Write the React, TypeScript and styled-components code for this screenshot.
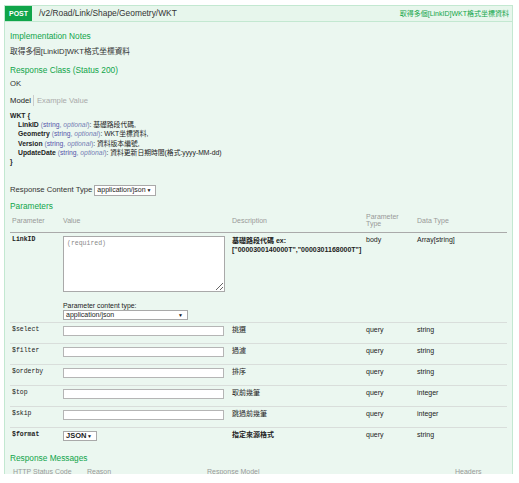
import React from 'react';
import styled, { createGlobalStyle } from 'styled-components';

const GREEN = '#10a54a';

const GlobalStyle = createGlobalStyle`
  html, body {
    margin: 0;
    padding: 0;
    background: #fff;
  }
  body {
    font-family: "Liberation Sans", Arial, "Noto Sans CJK TC", sans-serif;
    color: #333;
  }
  * {
    box-sizing: border-box;
  }
`;

const Page = styled.div`
  height: 474px;
  overflow: hidden;
  padding: 5px 6px 0 4px;
`;

const Heading = styled.div`
  display: flex;
  align-items: stretch;
  height: 17px;
  background: #e7f6ec;
  border: 1px solid #c3e8d1;
`;

const Method = styled.span`
  display: flex;
  align-items: center;
  justify-content: center;
  width: 27px;
  background: ${GREEN};
  color: #fff;
  font-size: 7px;
  font-weight: bold;
`;

const Path = styled.span`
  padding-left: 7px;
  font-size: 8.4px;
  line-height: 15px;
  color: #333;
`;

const Summary = styled.span`
  margin-left: auto;
  padding-right: 3px;
  font-size: 7px;
  line-height: 15px;
  color: ${GREEN};
`;

const Content = styled.div`
  background: #ebf7f0;
  border: 1px solid #c3e8d1;
  border-top: none;
  padding: 8.5px 5px 30px;
`;

const Title = styled.h4<{ $top?: number }>`
  margin: ${p => p.$top ?? 0}px 0 0;
  font-size: 8.3px;
  line-height: 11px;
  font-weight: normal;
  color: ${GREEN};
`;

const Text = styled.p<{ $top?: number }>`
  margin: ${p => p.$top ?? 0}px 0 0;
  font-size: 7.7px;
  line-height: 11px;
`;

const Tabs = styled.div`
  display: flex;
  margin-top: 6px;
  font-size: 7.7px;
  line-height: 11px;
`;

const Tab = styled.span<{ $active?: boolean }>`
  padding-right: 2px;
  margin-right: 3px;
  color: ${p => (p.$active ? '#222' : '#aaa')};
  border-right: ${p => (p.$active ? '1px solid #ccc' : 'none')};
`;

const ModelBox = styled.div`
  margin-top: 5.2px;
  font-size: 6.8px;
  line-height: 9.2px;
  color: #222;
`;

const PropLine = styled.div<{ $indent?: boolean }>`
  padding-left: ${p => (p.$indent ? 8 : 0)}px;
  white-space: nowrap;
`;

const PropName = styled.b``;

const PropMeta = styled.span`
  color: #7480b4;
`;

const PropType = styled.span`
  color: #5555aa;
`;

const PropOpt = styled.span`
  font-style: italic;
`;

const ContentType = styled.div`
  display: flex;
  align-items: center;
  gap: 2px;
  margin-top: 18px;
  font-size: 7.7px;
  line-height: 12px;
`;

const Select = styled.span<{ $w: number; $bold?: boolean }>`
  display: inline-flex;
  align-items: center;
  justify-content: space-between;
  width: ${p => p.$w}px;
  height: ${p => (p.$bold ? 10 : 11)}px;
  padding: 0 4px 0 2px;
  background: #fff;
  border: 1px solid #a9a9a9;
  font-size: ${p => (p.$bold ? 7.5 : 7)}px;
  font-weight: ${p => (p.$bold ? 'bold' : 'normal')};
  color: #222;
  line-height: 8px;
`;

const Arrow = styled.span`
  font-size: 5px;
  color: #111;
`;

const Table = styled.table`
  width: 100%;
  border-collapse: collapse;
  table-layout: fixed;
`;

const Th = styled.th<{ $first?: boolean }>`
  padding: 2px 0 4.5px ${p => (p.$first ? 2 : 0)}px;
  font-size: 7px;
  line-height: 6.5px;
  font-weight: normal;
  color: #999;
  text-align: left;
  vertical-align: middle;
  border-bottom: 1px solid #aaa;
`;

const Td = styled.td<{ $pb?: number; $bold?: boolean; $lh?: number }>`
  padding: 3px 0 ${p => p.$pb ?? 7}px;
  font-size: 7px;
  line-height: ${p => p.$lh ?? 8}px;
  font-weight: ${p => (p.$bold ? 'bold' : 'normal')};
  color: #222;
  vertical-align: top;
  border-top: 1px solid #d9dedb;
`;

const Code = styled.td<{ $bold?: boolean }>`
  padding: 3px 0 7px 2px;
  font-family: "Liberation Mono", "DejaVu Sans Mono", monospace;
  font-size: 6.5px;
  line-height: 8px;
  font-weight: ${p => (p.$bold ? 'bold' : 'normal')};
  color: #222;
  vertical-align: top;
  border-top: 1px solid #d9dedb;
`;

const Body = styled.textarea`
  display: block;
  width: 162px;
  height: 56px;
  margin: 0;
  padding: 3px;
  border: 1px solid #a9a9a9;
  background: #fff;
  font-family: "Liberation Mono", "DejaVu Sans Mono", monospace;
  font-size: 6.5px;
  &::placeholder {
    color: #888;
  }
`;

const SubLabel = styled.div`
  margin-top: 10px;
  font-size: 6.9px;
  line-height: 8px;
  color: #222;
`;

const Input = styled.input`
  display: block;
  width: 161px;
  height: 10px;
  margin: 0;
  padding: 0 2px;
  border: 1px solid #b5b5b5;
  background: #fff;
`;

const MsgTh = styled.th<{ $pl?: number }>`
  padding: 3.5px 0 0 ${p => p.$pl ?? 0}px;
  font-size: 7px;
  line-height: 8px;
  font-weight: normal;
  color: #999;
  text-align: left;
`;

const queryParams = [
  { name: '$select', desc: '挑選', type: 'string' },
  { name: '$filter', desc: '過濾', type: 'string' },
  { name: '$orderby', desc: '排序', type: 'string' },
  { name: '$top', desc: '取前幾筆', type: 'integer' },
  { name: '$skip', desc: '跳過前幾筆', type: 'integer' },
];

const props = [
  { name: 'LinkID', desc: '基礎路段代碼,' },
  { name: 'Geometry', desc: 'WKT坐標資料,' },
  { name: 'Version', desc: '資料版本編號,' },
  { name: 'UpdateDate', desc: '資料更新日期時間(格式:yyyy-MM-dd)' },
];

export default function App() {
  return (
    <>
      <GlobalStyle />
      <Page>
        <Heading>
          <Method>POST</Method>
          <Path>/v2/Road/Link/Shape/Geometry/WKT</Path>
          <Summary>取得多個[LinkID]WKT格式坐標資料</Summary>
        </Heading>
        <Content>
          <Title>Implementation Notes</Title>
          <Text $top={4.3}>取得多個[LinkID]WKT格式坐標資料</Text>

          <Title $top={8.7}>Response Class (Status 200)</Title>
          <Text $top={1.3}>OK</Text>

          <Tabs>
            <Tab $active>Model</Tab>
            <Tab>Example Value</Tab>
          </Tabs>
          <ModelBox>
            <PropLine><PropName>WKT {'{'}</PropName></PropLine>
            {props.map(p => (
              <PropLine $indent key={p.name}>
                <PropName>{p.name}</PropName>{' '}
                <PropMeta>
                  (<PropType>string</PropType>, <PropOpt>optional</PropOpt>)
                </PropMeta>
                : {p.desc}
              </PropLine>
            ))}
            <PropLine><PropName>{'}'}</PropName></PropLine>
          </ModelBox>

          <ContentType>
            Response Content Type
            <Select $w={62}>
              application/json <Arrow>▼</Arrow>
            </Select>
          </ContentType>

          <Title $top={5.2}>Parameters</Title>
          <Table>
            <colgroup>
              <col style={{ width: 53 }} />
              <col style={{ width: 169 }} />
              <col style={{ width: 134 }} />
              <col style={{ width: 51 }} />
              <col style={{ width: 90 }} />
            </colgroup>
            <thead>
              <tr>
                <Th $first>Parameter</Th>
                <Th>Value</Th>
                <Th>Description</Th>
                <Th>Parameter<br />Type</Th>
                <Th>Data Type</Th>
              </tr>
            </thead>
            <tbody>
              <tr>
                <Code $bold>LinkID</Code>
                <Td $pb={2}>
                  <Body placeholder="(required)" />
                  <SubLabel>Parameter content type:</SubLabel>
                  <Select $w={125} style={{ height: 10 }}>
                    application/json <Arrow>▼</Arrow>
                  </Select>
                </Td>
                <Td $bold $lh={9.5}>
                  基礎路段代碼 ex:<br />
                  ["0000300140000T","0000301168000T"]
                </Td>
                <Td>body</Td>
                <Td>Array[string]</Td>
              </tr>
              {queryParams.map(q => (
                <tr key={q.name}>
                  <Code>{q.name}</Code>
                  <Td><Input type="text" /></Td>
                  <Td>{q.desc}</Td>
                  <Td>query</Td>
                  <Td>{q.type}</Td>
                </tr>
              ))}
              <tr>
                <Code $bold>$format</Code>
                <Td>
                  <Select $w={34} $bold>
                    JSON <Arrow>▼</Arrow>
                  </Select>
                </Td>
                <Td $bold>指定來源格式</Td>
                <Td>query</Td>
                <Td>string</Td>
              </tr>
            </tbody>
          </Table>

          <Title $top={5.5}>Response Messages</Title>
          <Table>
            <colgroup>
              <col style={{ width: 77 }} />
              <col style={{ width: 120 }} />
              <col style={{ width: 248 }} />
              <col />
            </colgroup>
            <thead>
              <tr>
                <MsgTh $pl={3}>HTTP Status Code</MsgTh>
                <MsgTh>Reason</MsgTh>
                <MsgTh>Response Model</MsgTh>
                <MsgTh>Headers</MsgTh>
              </tr>
            </thead>
          </Table>
        </Content>
      </Page>
    </>
  );
}
